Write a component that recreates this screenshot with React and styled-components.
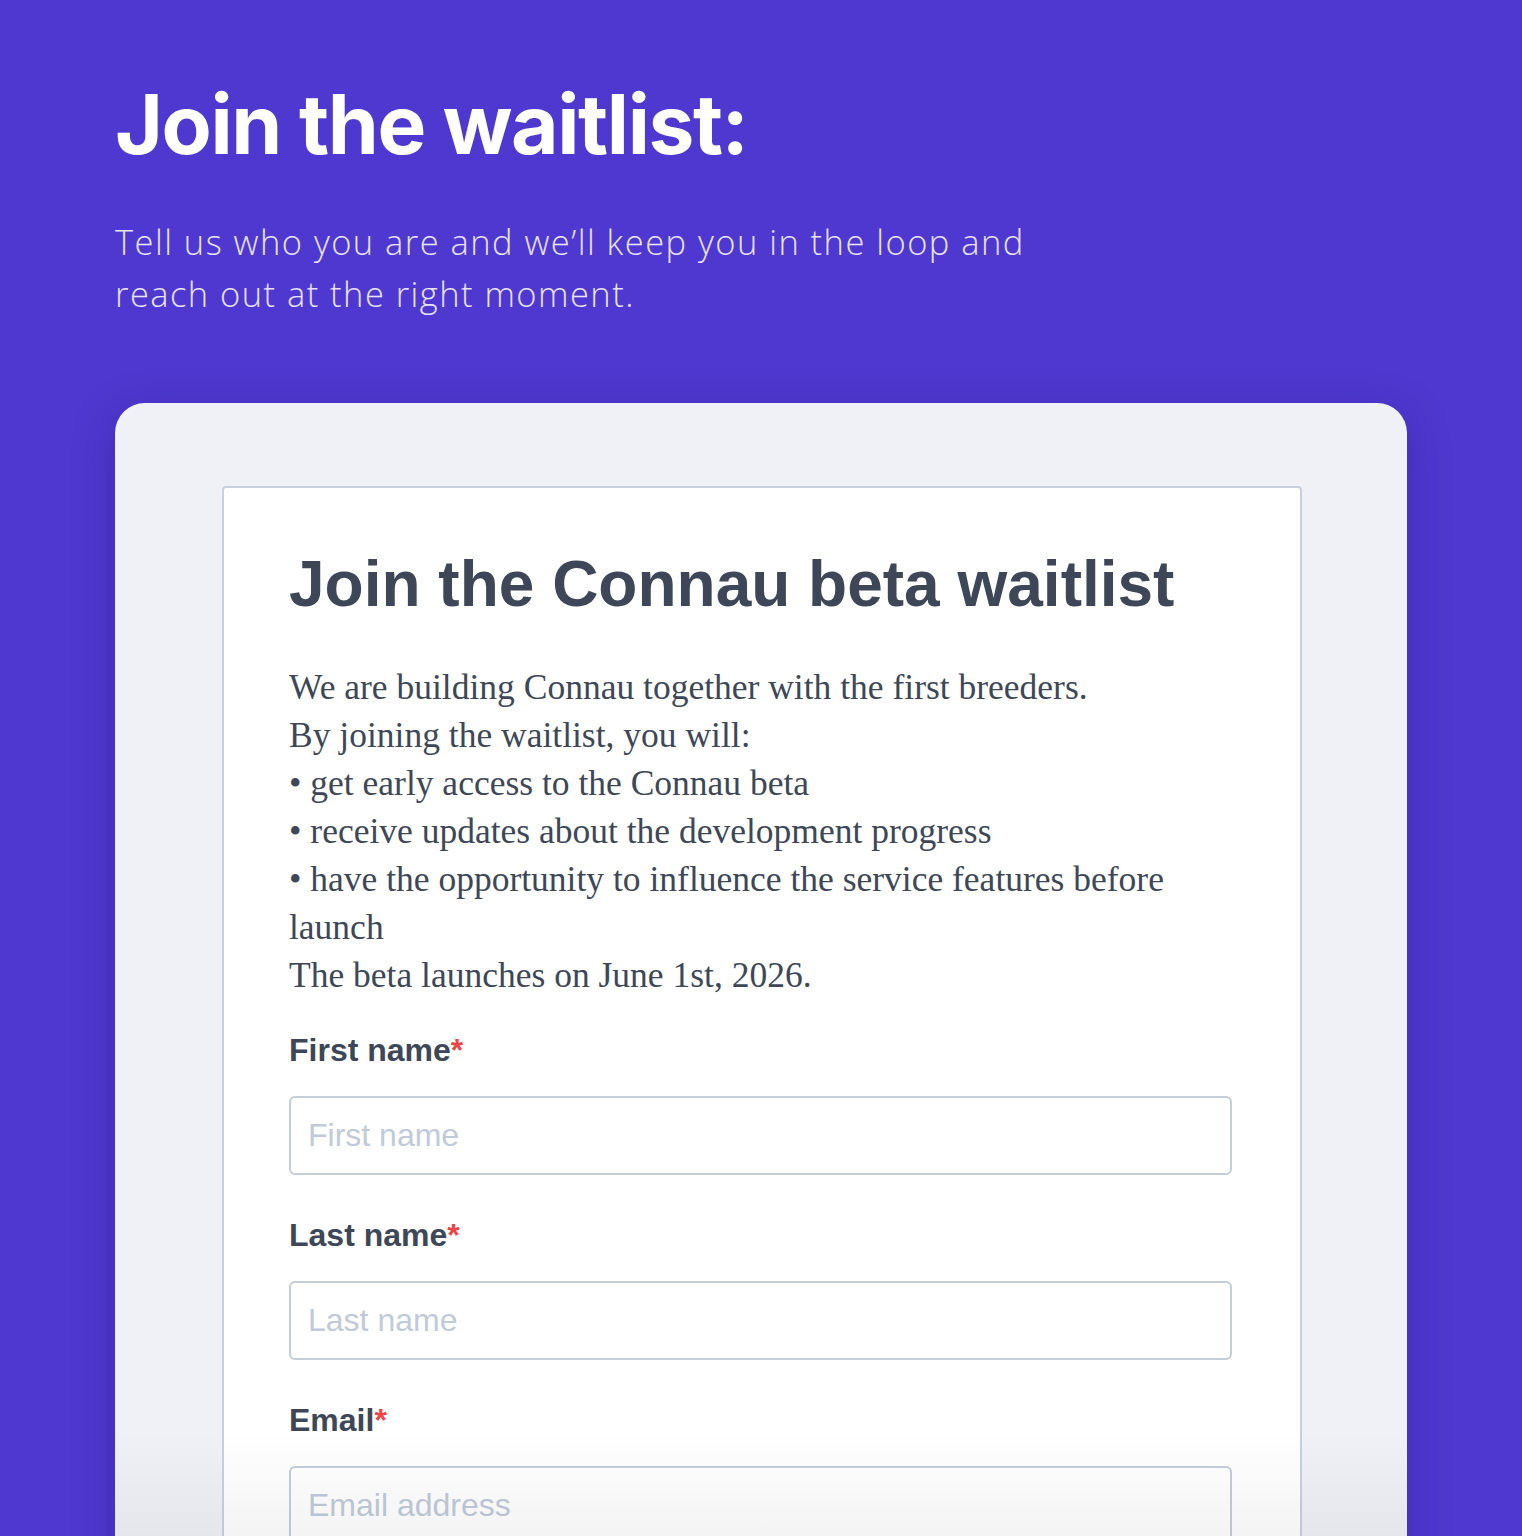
import React from 'react';
import styled, { createGlobalStyle } from 'styled-components';

const GlobalStyle = createGlobalStyle`
  html, body {
    margin: 0;
    padding: 0;
    background: #4f38cf;
  }
  * {
    box-sizing: border-box;
  }
`;

const Page = styled.div`
  height: 1536px;
  padding: 70px 115px 0 115px;
  background: #4f38cf;
  overflow: hidden;
`;

const Hero = styled.header`
  display: flex;
  flex-direction: column;
`;

const HeroTitle = styled.h1`
  margin: 0;
  font-family: Inter, "Noto Sans", sans-serif;
  font-weight: 700;
  font-size: 82px;
  line-height: 110px;
  letter-spacing: -1.4px;
  color: #ffffff;
`;

const HeroText = styled.p`
  margin: 36px 0 0 0;
  max-width: 945px;
  font-family: "Open Sans", Lato, sans-serif;
  font-weight: 300;
  font-size: 34.5px;
  line-height: 52px;
  letter-spacing: 1.45px;
  color: #e7e3fb;
`;

const Shell = styled.section`
  position: relative;
  margin-top: 83px;
  padding: 83px 105px 0 107px;
  background: #eff1f6;
  border-radius: 30px 30px 0 0;
  box-shadow: 0 10px 40px rgba(40, 20, 120, 0.35);
  min-height: 1200px;

  &::after {
    content: '';
    position: absolute;
    left: 0;
    right: 0;
    top: 1030px;
    height: 110px;
    background: linear-gradient(to bottom, rgba(20, 20, 40, 0), rgba(20, 20, 40, 0.05));
    pointer-events: none;
  }
`;

const FormCard = styled.div`
  background: #ffffff;
  border: 2px solid #c7d0dd;
  border-bottom: none;
  border-radius: 4px 4px 0 0;
  padding: 56px 66px 80px 65px;
  min-height: 1200px;
`;

const FormTitle = styled.h2`
  margin: 0;
  font-family: "Liberation Sans", Arial, sans-serif;
  font-weight: 700;
  font-size: 64px;
  line-height: 80px;
  color: #3d4758;
`;

const Intro = styled.div`
  margin-top: 39px;
  font-family: "Liberation Serif", "DejaVu Serif", serif;
  font-size: 35.5px;
  line-height: 48px;
  color: #3d4758;
  max-width: 943px;
`;

const Field = styled.div`
  display: flex;
  flex-direction: column;
  margin-top: ${(p) => p.$first ? '31px' : '40px'};
`;

const Label = styled.label`
  font-family: "Liberation Sans", Arial, sans-serif;
  font-weight: 700;
  font-size: 32px;
  line-height: 40px;
  color: #3d4758;
`;

const Required = styled.span`
  color: #ef4444;
`;

const Input = styled.input`
  margin-top: 26px;
  width: 943px;
  height: 79px;
  padding: 0 17px;
  border: 2px solid #c4cdda;
  border-radius: 6px;
  background: #ffffff;
  font-family: "Liberation Sans", Arial, sans-serif;
  font-size: 32px;
  color: #3d4758;
  outline: none;

  &::placeholder {
    color: #c1cad8;
  }
`;

const fields = [
  { name: 'firstName', label: 'First name', placeholder: 'First name', type: 'text' },
  { name: 'lastName', label: 'Last name', placeholder: 'Last name', type: 'text' },
  { name: 'email', label: 'Email', placeholder: 'Email address', type: 'email' },
];

const App = () => (
  <>
    <GlobalStyle />
    <Page>
      <Hero>
        <HeroTitle>Join the waitlist:</HeroTitle>
        <HeroText>
          Tell us who you are and we’ll keep you in the loop and reach out at the right moment.
        </HeroText>
      </Hero>
      <Shell>
        <FormCard>
          <FormTitle>Join the Connau beta waitlist</FormTitle>
          <Intro>
            We are building Connau together with the first breeders.
            <br />
            By joining the waitlist, you will:
            <br />
            • get early access to the Connau beta
            <br />
            • receive updates about the development progress
            <br />
            • have the opportunity to influence the service features before launch
            <br />
            The beta launches on June 1st, 2026.
          </Intro>
          {fields.map((f, i) => (
            <Field key={f.name} $first={i === 0}>
              <Label htmlFor={f.name}>
                {f.label}
                <Required>*</Required>
              </Label>
              <Input id={f.name} name={f.name} type={f.type} placeholder={f.placeholder} />
            </Field>
          ))}
        </FormCard>
      </Shell>
    </Page>
  </>
);

export default App;
